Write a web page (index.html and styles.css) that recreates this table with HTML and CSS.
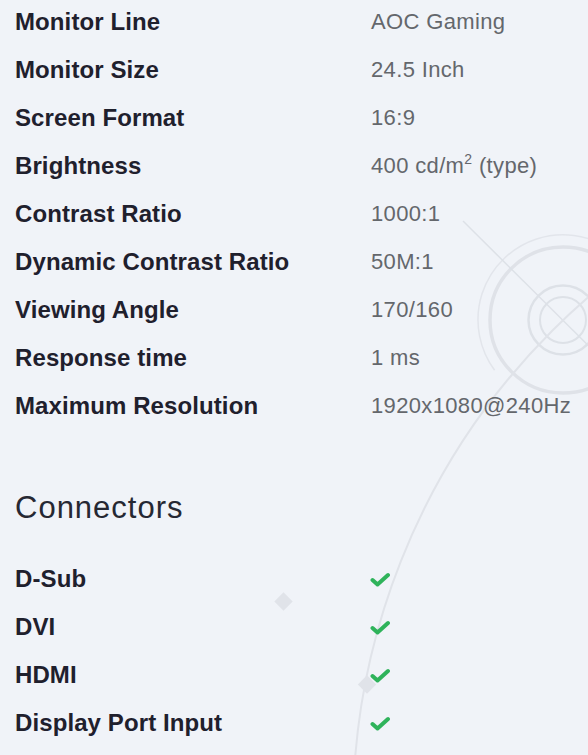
FILE: index.html
```html
<!DOCTYPE html>
<html lang="en">
<head>
<meta charset="utf-8">
<title>Monitor specifications</title>
<link rel="stylesheet" href="styles.css">
</head>
<body>
<svg class="deco" width="588" height="755" viewBox="0 0 588 755" aria-hidden="true">
  <circle cx="563" cy="320" r="23" fill="none" stroke="#dde1e7" stroke-width="2"/>
  <circle cx="563" cy="320" r="34.5" fill="none" stroke="#dde1e7" stroke-width="2.5"/>
  <circle cx="563" cy="320" r="73" fill="none" stroke="#dfe2e8" stroke-width="3.5"/>
  <path d="M 494.6 370.2 A 85 85 0 1 1 648 320" fill="none" stroke="#e2e5eb" stroke-width="1.5"/>
  <line x1="463" y1="221" x2="620" y2="377" stroke="#dde1e7" stroke-width="1.5"/>
  <circle cx="1034" cy="812" r="681" fill="none" stroke="#e0e3e9" stroke-width="2"/>
  <rect x="277" y="595" width="13" height="13" transform="rotate(45 283.5 601.5)" fill="#e0e3e9"/>
  <rect x="360.5" y="678" width="13" height="13" transform="rotate(45 367 684.5)" fill="#e0e3e9"/>
</svg>
<main class="page">
  <section class="specs">
    <div class="row"><div class="label">Monitor Line</div><div class="value">AOC Gaming</div></div>
    <div class="row"><div class="label">Monitor Size</div><div class="value">24.5 Inch</div></div>
    <div class="row"><div class="label">Screen Format</div><div class="value">16:9</div></div>
    <div class="row"><div class="label">Brightness</div><div class="value">400 cd/m<sup>2</sup> (type)</div></div>
    <div class="row"><div class="label">Contrast Ratio</div><div class="value">1000:1</div></div>
    <div class="row"><div class="label">Dynamic Contrast Ratio</div><div class="value">50M:1</div></div>
    <div class="row"><div class="label">Viewing Angle</div><div class="value">170/160</div></div>
    <div class="row"><div class="label">Response time</div><div class="value">1 ms</div></div>
    <div class="row"><div class="label">Maximum Resolution</div><div class="value">1920x1080@240Hz</div></div>
  </section>
  <h2 class="heading">Connectors</h2>
  <section class="specs connectors">
    <div class="row"><div class="label">D-Sub</div><div class="value"><svg class="check" width="20" height="16" viewBox="0 0 20 16"><polyline points="2.5,8 7.5,12.5 18,3" fill="none" stroke="#2fb35b" stroke-width="4" stroke-linecap="round" stroke-linejoin="round"/></svg></div></div>
    <div class="row"><div class="label">DVI</div><div class="value"><svg class="check" width="20" height="16" viewBox="0 0 20 16"><polyline points="2.5,8 7.5,12.5 18,3" fill="none" stroke="#2fb35b" stroke-width="4" stroke-linecap="round" stroke-linejoin="round"/></svg></div></div>
    <div class="row"><div class="label">HDMI</div><div class="value"><svg class="check" width="20" height="16" viewBox="0 0 20 16"><polyline points="2.5,8 7.5,12.5 18,3" fill="none" stroke="#2fb35b" stroke-width="4" stroke-linecap="round" stroke-linejoin="round"/></svg></div></div>
    <div class="row"><div class="label">Display Port Input</div><div class="value"><svg class="check" width="20" height="16" viewBox="0 0 20 16"><polyline points="2.5,8 7.5,12.5 18,3" fill="none" stroke="#2fb35b" stroke-width="4" stroke-linecap="round" stroke-linejoin="round"/></svg></div></div>
  </section>
</main>
</body>
</html>
```
FILE: styles.css
```css
html, body {
  margin: 0;
  padding: 0;
  background: #f0f3f8;
}
body {
  position: relative;
  width: 588px;
  height: 755px;
  overflow: hidden;
  font-family: "Liberation Sans", Arial, sans-serif;
}
.deco {
  position: absolute;
  top: 0;
  left: 0;
  z-index: 0;
}
.page {
  position: relative;
  z-index: 1;
  padding-left: 15px;
}
.specs {
  margin-top: -2px;
}
.row {
  display: grid;
  grid-template-columns: 356px 1fr;
  height: 48px;
  align-items: center;
}
.label {
  font-size: 24px;
  font-weight: 700;
  color: #1f202d;
  line-height: 48px;
  white-space: nowrap;
  letter-spacing: 0.1px;
}
.value {
  font-size: 22px;
  color: #64676c;
  line-height: 48px;
  white-space: nowrap;
  letter-spacing: 0.35px;
}
.value sup {
  font-size: 14px;
  line-height: 0;
  vertical-align: 9px;
}
.heading {
  margin: 58px 0 27px;
  height: 40px;
  line-height: 40px;
  font-size: 31px;
  font-weight: 400;
  letter-spacing: 1px;
  color: #262833;
}
.connectors {
  margin-top: 0;
}
.check {
  display: block;
  margin-left: -1px;
  margin-top: 2px;
}
```
